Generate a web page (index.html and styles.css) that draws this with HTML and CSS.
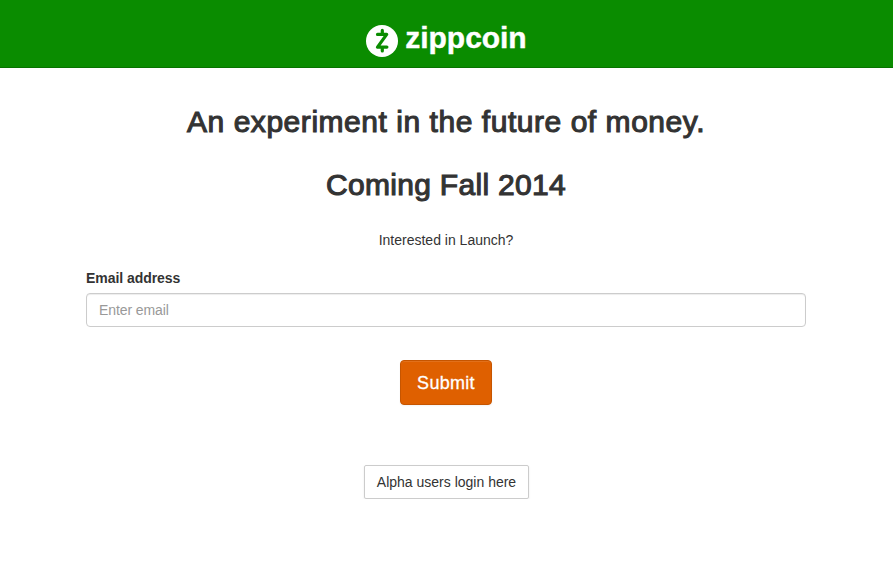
FILE: index.html
```html
<!DOCTYPE html>
<html lang="en">
<head>
	<meta charset="utf-8">
	<meta name="viewport" content="width=device-width, initial-scale=1">
	<title>zippcoin</title>
	<link rel="stylesheet" href="styles.css">
</head>
<body>
	<header class="navbar">
		<a class="brand" href="#">
			<svg class="logo" viewBox="0 0 32 32" width="32" height="32" aria-hidden="true">
				<circle cx="16" cy="16" r="16" fill="#fff"/>
				<path d="M16.3 5.4v3.6M16.3 22.5v3.5M11.5 9.4h9.2L11.5 22.1h9.4" fill="none" stroke="#0a8c00" stroke-width="3.2" stroke-linecap="round" stroke-linejoin="round"/>
			</svg>
			<span class="brand-name">zippcoin</span>
		</a>
	</header>

	<div class="container">
		<h2 class="tagline">An experiment in the future of money.</h2>
		<h2 class="launch">Coming Fall 2014</h2>
		<p class="lead">Interested in Launch?</p>

		<form class="signup">
			<label for="email">Email address</label>
			<input type="email" class="form-control" id="email" placeholder="Enter email">
			<button type="submit" class="btn btn-submit">Submit</button>
		</form>

		<a class="btn btn-login" href="#">Alpha users login here</a>
	</div>
</body>
</html>
```
FILE: styles.css
```css
* {
	box-sizing: border-box;
}

body {
	margin: 0;
	font-family: "Helvetica Neue", Helvetica, "Liberation Sans", Arial, sans-serif;
	font-size: 14px;
	line-height: 20px;
	color: #333;
	background: #fff;
}

.navbar {
	display: flex;
	justify-content: center;
	height: 68px;
	padding-top: 18px;
	background: #0a8c00;
	border-bottom: 1px solid #087300;
}

.brand {
	display: flex;
	gap: 7px;
	color: #fff;
	text-decoration: none;
}

.logo {
	margin-top: 7px;
}

.brand-name {
	font-size: 30px;
	font-weight: bold;
	line-height: 40px;
	letter-spacing: -0.05px;
	-webkit-text-stroke: 0.4px #fff;
}

.container {
	display: flex;
	flex-direction: column;
	align-items: center;
	width: 721px;
	margin: 0 auto;
	padding: 37px 1px 0 0;
}

h2 {
	margin: 0 0 30px;
	font-size: 30px;
	font-weight: normal;
	line-height: 33px;
	-webkit-text-stroke: 1.1px #333;
}

.tagline {
	letter-spacing: 0.54px;
}

.launch {
	letter-spacing: 0.3px;
}

.lead {
	margin: -1px 0 18px;
}

.signup {
	display: flex;
	flex-direction: column;
	align-items: center;
	width: 100%;
}

label {
	align-self: flex-start;
	margin-bottom: 5px;
	font-weight: bold;
	letter-spacing: -0.05px;
}

.form-control {
	width: 100%;
	height: 34px;
	padding: 6px 12px;
	font: inherit;
	letter-spacing: -0.1px;
	color: #555;
	border: 1px solid #ccc;
	border-radius: 4px;
	box-shadow: inset 0 1px 1px rgba(0,0,0,0.075);
}

.form-control::placeholder {
	color: #999;
}

.btn {
	font-family: inherit;
	text-align: center;
	text-decoration: none;
	cursor: pointer;
}

.btn-submit {
	width: 92px;
	height: 45px;
	margin-top: 33px;
	padding: 2px 0 0;
	font-size: 18px;
	letter-spacing: 0.3px;
	color: #fff;
	-webkit-text-stroke: 0.3px #fff;
	background: #df6000;
	border: 1px solid #c65500;
	border-radius: 4px;
	box-shadow: inset 0 1px 0 rgba(255,255,255,0.1), 0 1px 2px rgba(0,0,0,0.05);
}

.btn-login {
	width: 165px;
	height: 34px;
	margin: 60px 0 0 1px;
	padding: 6px 0;
	color: #333;
	border: 1px solid #ccc;
	border-radius: 2px;
	box-shadow: 0 1px 2px rgba(0,0,0,0.1);
}
```
